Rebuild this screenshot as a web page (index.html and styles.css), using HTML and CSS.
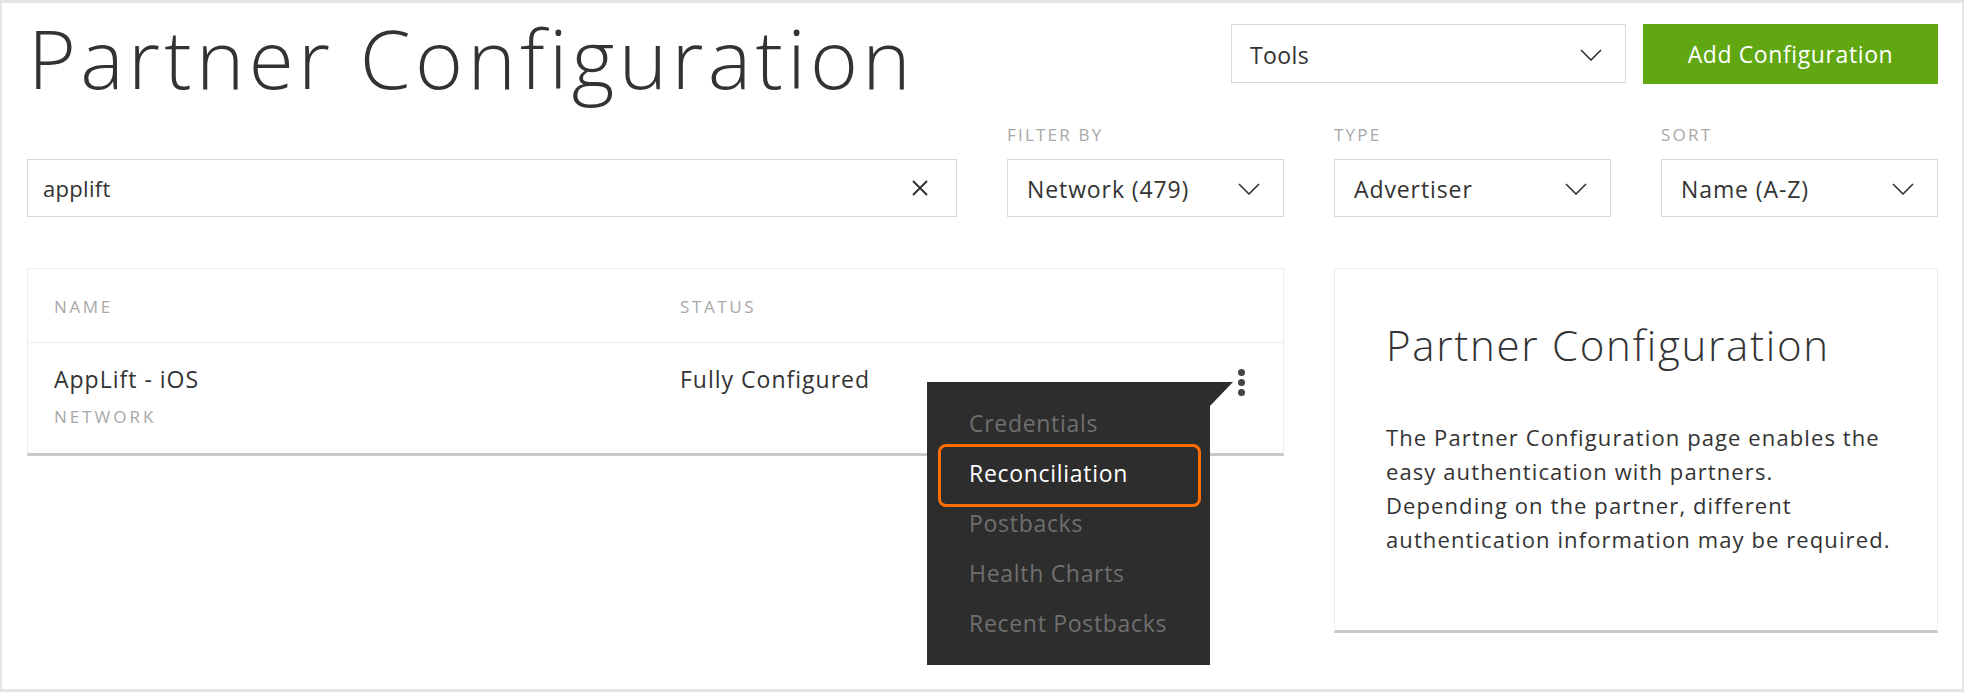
FILE: index.html
```html
<!DOCTYPE html>
<html lang="en">
<head>
<meta charset="utf-8">
<title>Partner Configuration</title>
<link rel="stylesheet" href="styles.css">
</head>
<body>
<div class="page">
  <header class="topbar">
    <h1 class="title">Partner Configuration</h1>
    <div class="actions">
      <div class="select select-tools">
        <span class="select-value">Tools</span>
        <svg class="chevron" width="22" height="12" viewBox="0 0 22 12"><polyline points="1,1 11,11 21,1" fill="none" stroke="#333" stroke-width="1.6"/></svg>
      </div>
      <button class="btn-primary">Add Configuration</button>
    </div>
  </header>

  <section class="filters">
    <div class="field field-search">
      <div class="search">
        <span class="search-value">applift</span>
        <svg class="clear" width="18" height="18" viewBox="0 0 18 18"><path d="M2 2 L16 16 M16 2 L2 16" stroke="#333" stroke-width="2" fill="none"/></svg>
      </div>
    </div>
    <div class="field">
      <div class="field-label">FILTER BY</div>
      <div class="select">
        <span class="select-value">Network (479)</span>
        <svg class="chevron" width="22" height="12" viewBox="0 0 22 12"><polyline points="1,1 11,11 21,1" fill="none" stroke="#333" stroke-width="1.6"/></svg>
      </div>
    </div>
    <div class="field">
      <div class="field-label">TYPE</div>
      <div class="select">
        <span class="select-value">Advertiser</span>
        <svg class="chevron" width="22" height="12" viewBox="0 0 22 12"><polyline points="1,1 11,11 21,1" fill="none" stroke="#333" stroke-width="1.6"/></svg>
      </div>
    </div>
    <div class="field">
      <div class="field-label">SORT</div>
      <div class="select">
        <span class="select-value">Name (A-Z)</span>
        <svg class="chevron" width="22" height="12" viewBox="0 0 22 12"><polyline points="1,1 11,11 21,1" fill="none" stroke="#333" stroke-width="1.6"/></svg>
      </div>
    </div>
  </section>

  <section class="content">
    <div class="table-card">
      <div class="thead">
        <div class="col-name">NAME</div>
        <div class="col-status">STATUS</div>
      </div>
      <div class="trow">
        <div class="col-name">
          <div class="partner-name">AppLift - iOS</div>
          <div class="partner-type">NETWORK</div>
        </div>
        <div class="col-status status-text">Fully Configured</div>
        <div class="kebab"><span></span><span></span><span></span></div>
      </div>
      <ul class="menu">
        <li class="menu-item">Credentials</li>
        <li class="menu-item is-active">Reconciliation</li>
        <li class="menu-item">Postbacks</li>
        <li class="menu-item">Health Charts</li>
        <li class="menu-item">Recent Postbacks</li>
      </ul>
    </div>

    <aside class="info-card">
      <h2 class="info-title">Partner Configuration</h2>
      <p class="info-text">The Partner Configuration page enables the easy authentication with partners. Depending on the partner, different authentication information may be required.</p>
    </aside>
  </section>
</div>
</body>
</html>
```

FILE: styles.css
```css
* { box-sizing: border-box; }

html, body {
  margin: 0;
  padding: 0;
  background: #ffffff;
}

body {
  font-family: "Open Sans", "Lato", sans-serif;
  color: #333333;
}

.page {
  width: 1964px;
  height: 692px;
  border-style: solid;
  border-color: #e5e5e5;
  border-width: 3px 2px 3px 2px;
  padding: 0 24px 0 25px;
}

/* ---------- top bar ---------- */
.topbar {
  display: flex;
  justify-content: space-between;
  align-items: flex-start;
}

.title {
  margin: -2px 0 0 1px;
  font-size: 82px;
  line-height: 112px;
  font-weight: 300;
  color: #333333;
  letter-spacing: 4.3px;
  white-space: nowrap;
}

.actions {
  display: flex;
  gap: 17px;
  margin-top: 21px;
}

.select {
  display: flex;
  align-items: center;
  justify-content: space-between;
  height: 58px;
  padding: 2px 23px 0 19px;
  border: 1px solid #d8d8d8;
  background: #ffffff;
  font-size: 23px;
  line-height: 26px;
  color: #333333;
  letter-spacing: 0.9px;
}

.select-tools {
  width: 395px;
  height: 59px;
  padding-left: 18px;
  letter-spacing: 0.4px;
}

.btn-primary {
  width: 295px;
  height: 60px;
  border: none;
  background: #60a711;
  color: #ffffff;
  font-family: "Open Sans", "Lato", sans-serif;
  font-size: 23px;
  font-weight: 400;
  letter-spacing: 0.6px;
  padding: 0;
}

/* ---------- filters ---------- */
.filters {
  display: grid;
  grid-template-columns: 930px 277px 277px 277px;
  column-gap: 50px;
  align-items: end;
  margin-top: 12px;
}

.field-label {
  font-size: 17px;
  line-height: 20px;
  color: #a8a8a8;
  letter-spacing: 2.2px;
  margin-bottom: 14px;
}

.search {
  display: flex;
  align-items: center;
  justify-content: space-between;
  height: 58px;
  padding: 0 27px 0 15px;
  border: 1px solid #d8d8d8;
  font-size: 22px;
  line-height: 26px;
  color: #333333;
  letter-spacing: 0.3px;
}

/* ---------- content ---------- */
.content {
  display: grid;
  grid-template-columns: 1257px 604px;
  column-gap: 50px;
  align-items: start;
  margin-top: 51px;
}

.table-card {
  position: relative;
  border: 1px solid #ececec;
  border-bottom: 3px solid #c9c9c9;
}

.thead {
  display: flex;
  align-items: center;
  height: 74px;
  padding: 2px 0 0 26px;
  border-bottom: 1px solid #ececec;
  font-size: 17px;
  line-height: 20px;
  color: #a8a8a8;
  letter-spacing: 2.6px;
}

.col-name { width: 626px; }
.col-status { width: 400px; }

.trow {
  display: flex;
  align-items: flex-start;
  height: 110px;
  padding: 23px 0 0 26px;
}

.partner-name,
.status-text {
  font-size: 23px;
  line-height: 26px;
  color: #333333;
  letter-spacing: 1px;
}

.partner-type {
  margin-top: 14px;
  font-size: 17px;
  line-height: 22px;
  color: #a8a8a8;
  letter-spacing: 3px;
}

.kebab {
  display: flex;
  flex-direction: column;
  gap: 3px;
  margin: 3px 38px 0 auto;
}

.kebab span {
  display: block;
  width: 7px;
  height: 7px;
  border-radius: 50%;
  background: #444444;
}

/* ---------- overflow menu (overlay) ---------- */
.menu {
  position: absolute;
  left: 899px;
  top: 113px;
  width: 306px;
  height: 283px;
  margin: 0;
  padding: 16px 0 0 0;
  list-style: none;
  background: #2d2d2d;
  clip-path: polygon(0 0, 100% 0, 283px 24px, 283px 100%, 0 100%);
  z-index: 5;
}

.menu-item {
  position: relative;
  height: 50px;
  padding-left: 42px;
  font-size: 23px;
  line-height: 50px;
  color: #6f6f6f;
  letter-spacing: 0.7px;
}

.menu-item.is-active {
  color: #ffffff;
}

.menu-item.is-active::before {
  content: "";
  position: absolute;
  left: 11px;
  top: -4px;
  width: 257px;
  height: 57px;
  border: 3px solid #ff6c00;
  border-radius: 8px;
}

/* ---------- info card ---------- */
.info-card {
  border: 1px solid #ececec;
  border-bottom: 3px solid #c9c9c9;
  padding: 52px 30px 74px 51px;
}

.info-title {
  margin: 0;
  font-size: 42px;
  line-height: 48px;
  font-weight: 300;
  color: #333333;
  letter-spacing: 1.7px;
}

.info-text {
  width: 512px;
  margin: 51px 0 0 0;
  font-size: 22px;
  line-height: 34px;
  color: #333333;
  letter-spacing: 1.1px;
}
```
